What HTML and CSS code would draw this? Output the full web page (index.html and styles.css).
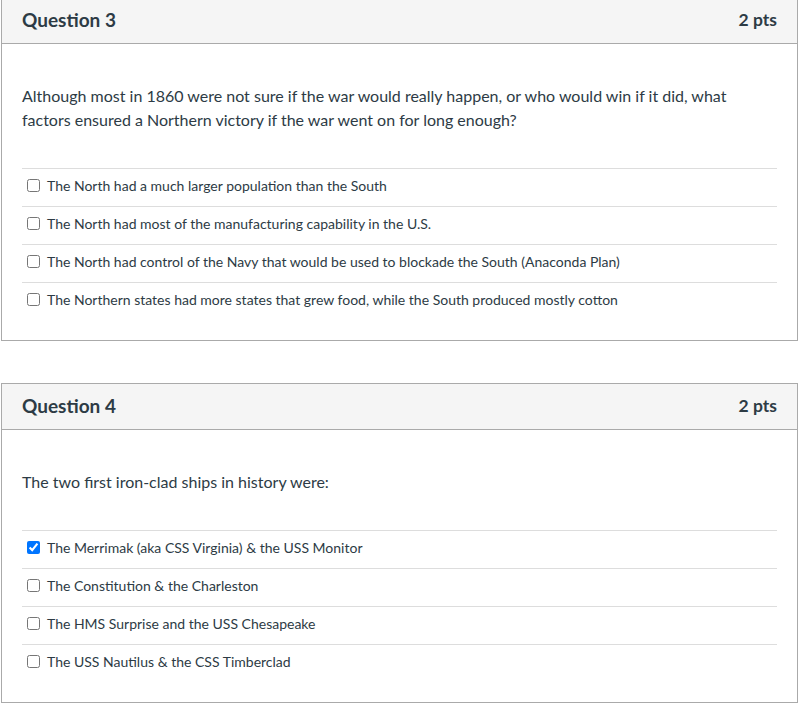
FILE: index.html
```html
<!DOCTYPE html>
<html lang="en">
<head>
<meta charset="utf-8">
<title>Quiz</title>
<link rel="stylesheet" href="styles.css">
</head>
<body>
<div class="question first">
  <div class="q-header">
    <span class="q-name">Question 3</span>
    <span class="q-points">2 pts</span>
  </div>
  <div class="q-text">Although most in 1860 were not sure if the war would really happen, or who would win if it did, what factors ensured a Northern victory if the war went on for long enough?</div>
  <div class="answers">
    <label class="answer"><input type="checkbox"><span>The North had a much larger population than the South</span></label>
    <label class="answer"><input type="checkbox"><span>The North had most of the manufacturing capability in the U.S.</span></label>
    <label class="answer"><input type="checkbox"><span>The North had control of the Navy that would be used to blockade the South (Anaconda Plan)</span></label>
    <label class="answer"><input type="checkbox"><span>The Northern states had more states that grew food, while the South produced mostly cotton</span></label>
  </div>
</div>
<div class="question">
  <div class="q-header">
    <span class="q-name">Question 4</span>
    <span class="q-points">2 pts</span>
  </div>
  <div class="q-text">The two first iron-clad ships in history were:</div>
  <div class="answers">
    <label class="answer"><input type="checkbox" checked><span>The Merrimak (aka CSS Virginia) &amp; the USS Monitor</span></label>
    <label class="answer"><input type="checkbox"><span>The Constitution &amp; the Charleston</span></label>
    <label class="answer"><input type="checkbox"><span>The HMS Surprise and the USS Chesapeake</span></label>
    <label class="answer"><input type="checkbox"><span>The USS Nautilus &amp; the CSS Timberclad</span></label>
  </div>
</div>
</body>
</html>
```

FILE: styles.css
```css
html, body {
  margin: 0;
  padding: 0;
  background: #ffffff;
}
body {
  font-family: Lato, "Open Sans", sans-serif;
  color: #2d3b45;
}
.question {
  width: 797px;
  box-sizing: border-box;
  margin: 0 0 42px 1px;
  border: 1px solid #aaaaaa;
  background: #ffffff;
}
.question.first {
  margin-top: -3px;
}
.q-header {
  height: 43px;
  box-sizing: content-box;
  padding: 0 20px 2px;
  display: flex;
  align-items: center;
  justify-content: space-between;
  background: #f5f5f5;
  border-bottom: 1px solid #aaaaaa;
  font-weight: 700;
}
.q-name {
  font-size: 19px;
}
.q-points {
  font-size: 17.5px;
}
.q-text {
  padding: 40px 20px 36px;
  font-size: 16px;
  line-height: 24px;
}
.answers {
  margin: 0 20px;
  padding-bottom: 20px;
}
.answer {
  display: flex;
  align-items: center;
  gap: 7px;
  border-top: 1px solid #dddddd;
  padding: 6px 0 10px 5px;
  font-size: 14px;
  line-height: 21px;
}
.answer input {
  margin: 0;
  width: 13px;
  height: 13px;
  flex: none;
}
```
